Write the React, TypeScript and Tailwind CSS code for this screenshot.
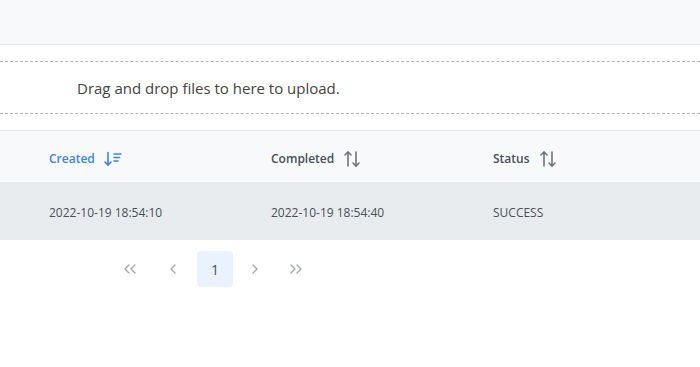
import React from 'react';

const font = { fontFamily: '"Open Sans", "Noto Sans", sans-serif' };

function SortDown() {
  return (
    <svg width="18" height="16" viewBox="0 0 18 16" fill="none" stroke="currentColor" strokeWidth="1.6" strokeLinecap="round">
      <path d="M4 1.5v12.5M1 11l3 3.2L7 11" />
      <path d="M10 3h7M10 6.5h5.5M10 10h4" />
    </svg>
  );
}

function SortAlt() {
  return (
    <svg width="18" height="18" viewBox="0 0 18 18" fill="none" stroke="currentColor" strokeWidth="1.6" strokeLinecap="round">
      <path d="M5 16V2M2 5l3-3.2L8 5" />
      <path d="M13 2v14M10 13l3 3.2 3-3.2" />
    </svg>
  );
}

function Chevron({ dir, double }: { dir: 'l' | 'r'; double?: boolean }) {
  const one = dir === 'l' ? 'M6 2 2 6l4 4' : 'M2 2l4 4-4 4';
  return (
    <svg width={double ? 16 : 10} height="12" viewBox={double ? '0 0 16 12' : '0 0 10 12'} fill="none" stroke="currentColor" strokeWidth="1.3" strokeLinecap="round" strokeLinejoin="round">
      <path d={one} />
      {double && <path d={one} transform="translate(6 0)" />}
    </svg>
  );
}

export default function App() {
  return (
    <div className="w-[700px] h-[367px] bg-white overflow-hidden text-[#495057]" style={font}>
      <div className="h-[45px] bg-[#f8f9fa] border-b border-[#dee2e6]" />
      <div className="pt-4">
        <div className="border-y border-dashed border-[#b5b5b5] h-[53px] flex items-center pl-[77px] pt-[2px] text-[15px] text-[#444]">
          Drag and drop files to here to upload.
        </div>
      </div>
      <div className="mt-4 border-t border-[#e5e7eb]">
        <div className="grid grid-cols-[222px_222px_1fr] pl-[49px] pt-[5px] h-[52px] items-center bg-[#f8f9fa] text-[12px] font-semibold border-b border-[#e9ecef]">
          <div className="flex items-center gap-[9px] text-[#3b82f6]">
            Created
            <SortDown />
          </div>
          <div className="flex items-center gap-[9px]">
            Completed
            <span className="text-[#6c757d]"><SortAlt /></span>
          </div>
          <div className="flex items-center gap-[9px]">
            Status
            <span className="text-[#6c757d]"><SortAlt /></span>
          </div>
        </div>
        <div className="grid grid-cols-[222px_222px_1fr] pl-[49px] pt-[2px] h-[57px] items-center bg-[#e9ecef] text-[12px]">
          <div>2022-10-19 18:54:10</div>
          <div>2022-10-19 18:54:40</div>
          <div>SUCCESS</div>
        </div>
      </div>
      <div className="flex items-center pl-[113px] pt-[11px] text-[#a0a7ae]">
        <button className="w-[36px] h-[36px] flex items-center justify-center"><Chevron dir="l" double /></button>
        <button className="w-[36px] h-[36px] ml-[7px] flex items-center justify-center"><Chevron dir="l" /></button>
        <button className="w-[36px] h-[36px] ml-[5px] rounded bg-[#eaf3fd] text-[#495057] text-[14px] flex items-center justify-center">1</button>
        <button className="w-[36px] h-[36px] ml-[5px] flex items-center justify-center"><Chevron dir="r" /></button>
        <button className="w-[36px] h-[36px] ml-[5px] flex items-center justify-center"><Chevron dir="r" double /></button>
      </div>
    </div>
  );
}
